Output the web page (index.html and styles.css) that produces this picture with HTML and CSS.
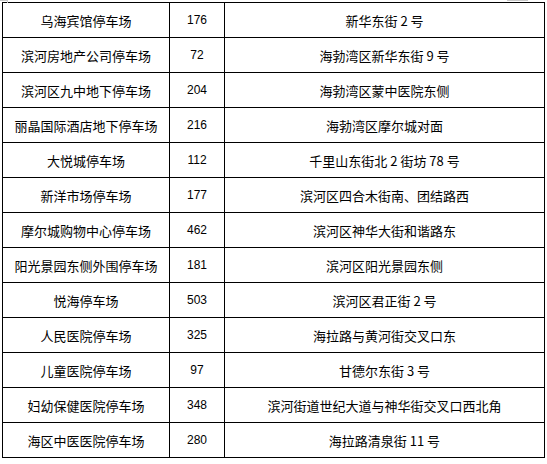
FILE: index.html
```html
<!DOCTYPE html>
<html lang="zh">
<head>
<meta charset="utf-8">
<link rel="stylesheet" href="styles.css">
</head>
<body>
<div class="page">
  <span class="mark mark-left"></span>
  <span class="mark mark-right"></span>
  <div class="table">
    <div class="c">乌海宾馆停车场</div><div class="c num">176</div><div class="c">新华东街 2 号</div>
    <div class="c">滨河房地产公司停车场</div><div class="c num">72</div><div class="c">海勃湾区新华东街 9 号</div>
    <div class="c">滨河区九中地下停车场</div><div class="c num">204</div><div class="c">海勃湾区蒙中医院东侧</div>
    <div class="c">丽晶国际酒店地下停车场</div><div class="c num">216</div><div class="c">海勃湾区摩尔城对面</div>
    <div class="c">大悦城停车场</div><div class="c num">112</div><div class="c">千里山东街北 2 街坊 78 号</div>
    <div class="c">新洋市场停车场</div><div class="c num">177</div><div class="c">滨河区四合木街南、团结路西</div>
    <div class="c">摩尔城购物中心停车场</div><div class="c num">462</div><div class="c">滨河区神华大街和谐路东</div>
    <div class="c">阳光景园东侧外围停车场</div><div class="c num">181</div><div class="c">滨河区阳光景园东侧</div>
    <div class="c">悦海停车场</div><div class="c num">503</div><div class="c">滨河区君正街 2 号</div>
    <div class="c">人民医院停车场</div><div class="c num">325</div><div class="c">海拉路与黄河街交叉口东</div>
    <div class="c">儿童医院停车场</div><div class="c num">97</div><div class="c">甘德尔东街 3 号</div>
    <div class="c">妇幼保健医院停车场</div><div class="c num">348</div><div class="c">滨河街道世纪大道与神华街交叉口西北角</div>
    <div class="c">海区中医医院停车场</div><div class="c num">280</div><div class="c">海拉路清泉街 11 号</div>
  </div>
</div>
</body>
</html>
```

FILE: styles.css
```css
html, body {
  margin: 0;
  padding: 0;
  background: #ffffff;
}
.page {
  position: relative;
  width: 547px;
  height: 464px;
  padding: 2px 0 0 2px;
  box-sizing: border-box;
}
.mark {
  position: absolute;
  display: block;
  border-color: #c8c8c8;
  border-style: solid;
  border-width: 0;
}
.mark-left {
  left: 0;
  top: 0;
  width: 7px;
  height: 2px;
  border-top-width: 1px;
  border-right-width: 1px;
}
.mark-right {
  left: 507px;
  top: 0;
  width: 21px;
  height: 1px;
  border-top-width: 1px;
}
.table {
  display: grid;
  grid-template-columns: 167px 55px 320px;
  grid-auto-rows: 35px;
  width: 543px;
  box-sizing: border-box;
  border-left: 1px solid #000;
  border-top: 1px solid #000;
  font-family: "Noto Sans CJK SC", "DejaVu Sans", sans-serif;
  font-size: 13px;
  color: #000;
}
.c {
  box-sizing: border-box;
  border-right: 1px solid #000;
  border-bottom: 1px solid #000;
  display: flex;
  align-items: center;
  justify-content: center;
  white-space: nowrap;
  line-height: 1;
}
.num {
  font-family: "Liberation Sans", sans-serif;
  font-size: 12px;
}
```
